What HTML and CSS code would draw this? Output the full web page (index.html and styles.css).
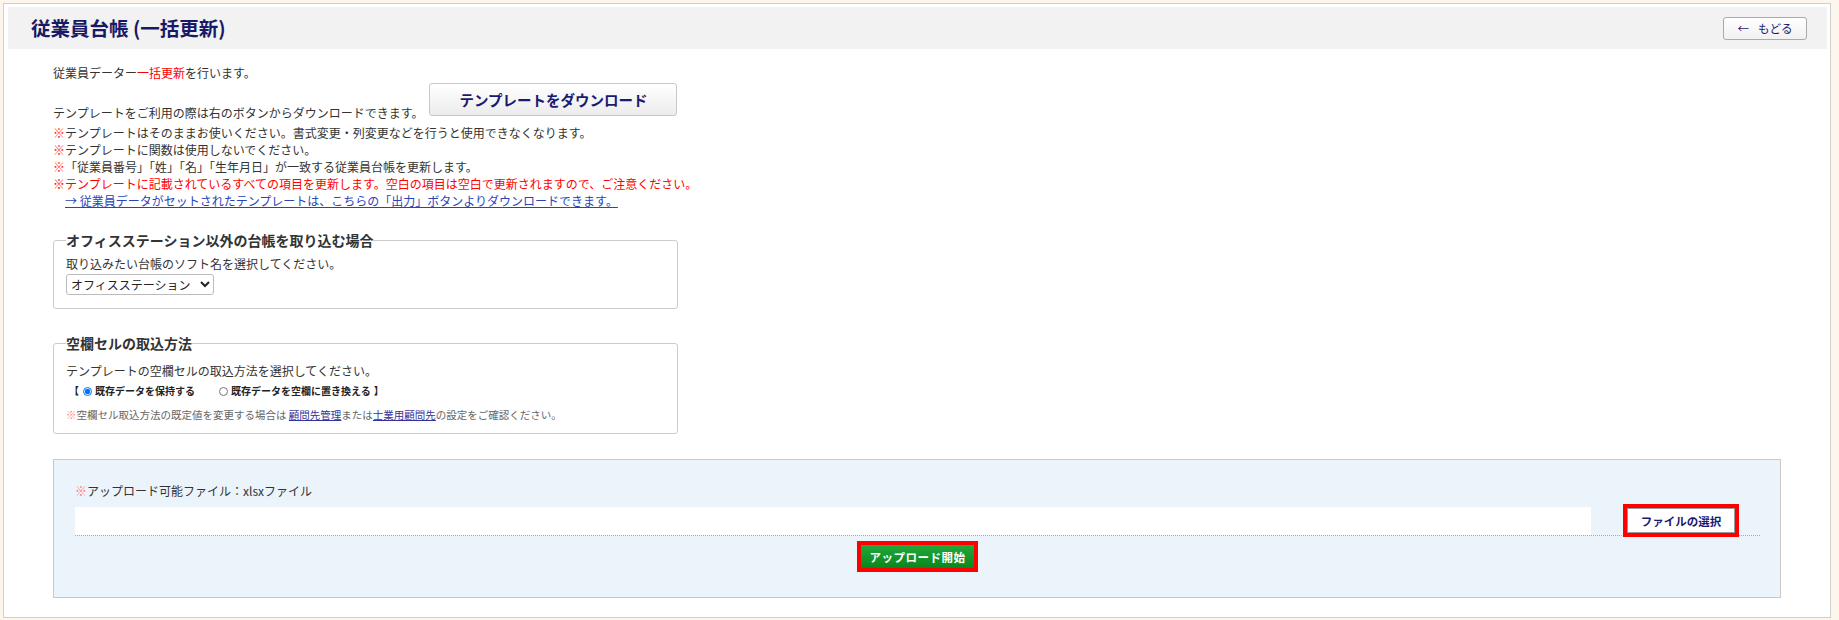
FILE: index.html
```html
<!DOCTYPE html>
<html lang="ja">
<head>
  <meta charset="UTF-8" />
  <meta name="viewport" content="width=device-width, initial-scale=1.0"/>
  <title>従業員台帳 (一括更新)</title>
  <link rel="stylesheet" href="styles.css">
</head>
<body>

  <div class="page">

    <!-- Title bar -->
    <div class="page-head">
      <h1 class="page-title">従業員台帳 (一括更新)</h1>
      <a href="#" class="back-btn"><span class="back-arrow">←</span>もどる</a>
    </div>

    <div class="content">
      <p class="line intro">従業員データー<span class="red">一括更新</span>を行います。</p>

      <div class="download-row">
        <p class="line">テンプレートをご利用の際は右のボタンからダウンロードできます。</p>
        <button type="button" class="download-btn">テンプレートをダウンロード</button>
      </div>

      <div class="notes">
        <p class="line"><span class="mark">※</span>テンプレートはそのままお使いください。書式変更・列変更などを行うと使用できなくなります。</p>
        <p class="line"><span class="mark">※</span>テンプレートに関数は使用しないでください。</p>
        <p class="line"><span class="mark">※</span>「従業員番号」「姓」「名」「生年月日」が一致する従業員台帳を更新します。</p>
        <p class="line red">※テンプレートに記載されているすべての項目を更新します。空白の項目は空白で更新されますので、ご注意ください。</p>
        <p class="line"><a href="#" class="export-link">→ 従業員データがセットされたテンプレートは、こちらの「出力」ボタンよりダウンロードできます。</a></p>
      </div>

      <fieldset class="box box-soft">
        <legend>オフィスステーション以外の台帳を取り込む場合</legend>
        <p class="line">取り込みたい台帳のソフト名を選択してください。</p>
        <select class="soft-select">
          <option>オフィスステーション</option>
          <option>その他</option>
        </select>
      </fieldset>

      <fieldset class="box box-blank">
        <legend>空欄セルの取込方法</legend>
        <p class="line">テンプレートの空欄セルの取込方法を選択してください。</p>
        <div class="radio-row">
          <span class="bracket-open">【</span>
          <label class="radio"><input type="radio" name="blank" checked>既存データを保持する</label>
          <label class="radio radio-second"><input type="radio" name="blank">既存データを空欄に置き換える</label>
          <span class="bracket-close">】</span>
        </div>
        <p class="small-note"><span class="mark-light">※</span>空欄セル取込方法の既定値を変更する場合は <a href="#">顧問先管理</a>または<a href="#">士業用顧問先</a>の設定をご確認ください。</p>
      </fieldset>

      <!-- Upload area -->
      <div class="upload">
        <p class="line"><span class="mark-light">※</span>アップロード可能ファイル：xlsxファイル</p>
        <div class="file-row">
          <div class="file-name"></div>
          <div class="red-frame file-frame">
            <button type="button" class="file-btn">ファイルの選択</button>
          </div>
        </div>
        <div class="upload-actions">
          <div class="red-frame">
            <button type="button" class="upload-btn">アップロード開始</button>
          </div>
        </div>
      </div>
    </div>

  </div>

</body>
</html>
```

FILE: styles.css
```css
* {
  box-sizing: border-box;
  margin: 0;
  padding: 0;
}

body {
  background-color: #fcf6ec;
  color: #333;
  font-family: 'Noto Sans CJK JP', 'Noto Sans', sans-serif;
  font-size: 12px;
  line-height: 17px;
  margin: 3px 8px 0 3px;
}

.page {
  background: white;
  border: 1px solid #cfcfcf;
  padding: 3px 3px 0 4px;
}

.page-head {
  height: 42px;
  background: #f2f2f2;
  display: flex;
  align-items: center;
  justify-content: space-between;
  padding: 0 20px 0 23px;
}

.page-title {
  font-size: 19.5px;
  font-weight: bold;
  color: #191966;
  line-height: 24px;
}

.back-btn {
  display: flex;
  align-items: center;
  justify-content: center;
  width: 84px;
  height: 23px;
  border: 1px solid #aaa;
  border-radius: 3px;
  background: linear-gradient(#ffffff, #f1f1f1);
  color: #1a1a6e;
  text-decoration: none;
  font-size: 11.5px;
}

.back-arrow {
  margin-right: 9px;
}

.content {
  padding: 0 46px 19px 45px;
}

.red {
  color: #ff0000;
}

.mark {
  color: #ff2a2a;
}

.mark-light {
  color: #f77;
}

.intro {
  margin-top: 15px;
}

.download-row {
  display: flex;
  align-items: flex-start;
  margin-top: 2px;
}

.download-row .line {
  margin-top: 21px;
}

.download-btn {
  margin-left: 6px;
  width: 248px;
  height: 33px;
  border: 1px solid #c8c8c8;
  border-radius: 3px;
  background: linear-gradient(#ffffff, #ececec);
  color: #1a1a6e;
  font-family: inherit;
  font-size: 14.5px;
  font-weight: bold;
}

.notes {
  margin-top: 3px;
}

.export-link {
  margin-left: 12px;
  color: #2a44b8;
}

/* fieldsets */
.box {
  width: 625px;
  border: 1px solid #cccccc;
  border-radius: 3px;
  padding: 0 12px 13px 12px;
}

.box legend {
  font-size: 14px;
  font-weight: bold;
  line-height: 17px;
  color: #333;
  padding: 0;
}

.box-soft {
  margin-top: 23px;
}

.box-soft .line {
  margin-top: 6px;
}

.soft-select {
  margin-top: 2px;
  width: 148px;
  height: 21px;
  font-family: inherit;
  font-size: 12px;
  color: #222;
  border: 1px solid #bbb;
  border-radius: 3px;
  background: white;
}

.box-blank {
  margin-top: 26px;
  padding-bottom: 11px;
}

.box-blank .line {
  margin-top: 10px;
}

.radio-row {
  display: flex;
  align-items: center;
  margin-top: 5px;
  font-size: 10px;
  line-height: 14px;
  font-weight: bold;
  color: #222;
  padding-left: 3px;
}

.bracket-open {
  margin-right: 2px;
}

.bracket-close {
  margin-left: 3px;
}

.radio {
  display: flex;
  align-items: center;
}

.radio input {
  width: 9px;
  height: 9px;
  margin: 0 3px 0 2px;
}

.radio-second {
  margin-left: 22px;
}

.small-note {
  margin-top: 9px;
  font-size: 10.5px;
  line-height: 15px;
  color: #666;
}

.small-note a {
  color: #33339a;
}

/* upload */
.upload {
  margin-top: 25px;
  background: #ecf4fb;
  border: 1px solid #c9c9c9;
  padding: 22px 20px 25px 21px;
}

.file-row {
  display: flex;
  align-items: center;
  margin-top: 8px;
  border-bottom: 1px dotted #aaa;
}

.file-name {
  width: 1516px;
  height: 28px;
  background: white;
}

.red-frame {
  border: 4px solid #ff0000;
}

.file-frame {
  margin: -3px 0 -2px 32px;
}

.file-btn {
  display: block;
  width: 108px;
  height: 25px;
  background: white;
  border: 1px solid #999;
  color: #1a1a6e;
  font-family: inherit;
  font-size: 11.5px;
  font-weight: bold;
}

.upload-actions {
  display: flex;
  justify-content: center;
  margin-top: 5px;
}

.upload-btn {
  display: block;
  width: 113px;
  height: 23px;
  border: none;
  background: linear-gradient(#22a93b, #0a861b);
  color: white;
  font-family: inherit;
  font-size: 11.5px;
  font-weight: bold;
  letter-spacing: 0.5px;
}
```
